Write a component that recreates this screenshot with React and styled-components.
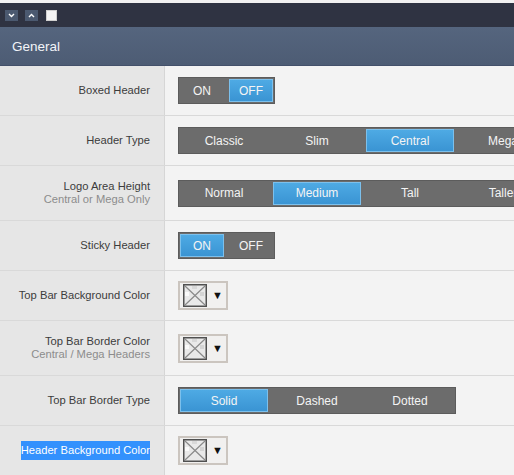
import React from 'react';
import styled, { createGlobalStyle, css } from 'styled-components';

const GlobalStyle = createGlobalStyle`
  html, body {
    margin: 0;
    padding: 0;
    background: #f1f1f1;
    overflow: hidden;
  }
  body {
    font-family: "Liberation Sans", Arial, sans-serif;
  }
`;

const Panel = styled.div`
  padding-top: 3px;
  width: 514px;
  overflow: hidden;
`;

const Toolbar = styled.div`
  display: flex;
  align-items: center;
  gap: 7px;
  height: 24px;
  padding-left: 5px;
  background: #2f3342;
`;

const ToolButton = styled.span`
  display: flex;
  align-items: center;
  justify-content: center;
  width: 13px;
  height: 11px;
  background: #4b5970;
`;

const ToolCheck = styled.span`
  width: 9px;
  height: 9px;
  margin-left: 1px;
  background: #f4f4f4;
  border: 1px solid #d0d0d0;
`;

const SectionHeader = styled.div`
  display: flex;
  align-items: center;
  height: 38px;
  padding-left: 12px;
  background: linear-gradient(#55657e, #4d5c74);
  border-bottom: 1px solid #43506a;
  color: #f2f4f8;
  font-size: 13.5px;
`;

const Row = styled.div`
  display: grid;
  grid-template-columns: 165px 1fr;
  height: ${p => (p.$tall ? 54 : 49)}px;
  border-bottom: 1px solid #d9d9d9;
`;

const LabelCell = styled.div`
  display: flex;
  flex-direction: column;
  justify-content: center;
  align-items: flex-end;
  padding-right: 14px;
  background: #e6e6e6;
  border-right: 1px solid #d6d6d6;
  text-align: right;
  font-size: 11.2px;
  line-height: 13px;
  color: #3c3c3c;
`;

const Label = styled.span`
  ${p => p.$selected && css`
    background: #3391fd;
    color: #fff;
    padding: 3px 0;
  `}
`;

const SubLabel = styled.span`
  color: #8c8c8c;
`;

const ControlCell = styled.div`
  display: flex;
  align-items: center;
  padding-left: 13px;
  background: #f3f3f3;
  overflow: hidden;
`;

const Segmented = styled.div`
  display: flex;
  flex-shrink: 0;
  gap: 5px;
  padding: 1px;
  background: #6c6c6c;
  border: 1px solid #5c5c5c;
`;

const Segment = styled.span`
  display: flex;
  align-items: center;
  justify-content: center;
  box-sizing: border-box;
  width: ${p => p.$width}px;
  height: 23px;
  color: #f4f4f4;
  font-size: 12px;
  border: 1px solid transparent;
  ${p => p.$active && css`
    background: linear-gradient(#4eaae4, #3a94d3);
    border-color: #7cc0ec;
  `}
`;

const ColorPicker = styled.div`
  display: flex;
  align-items: center;
  gap: 5px;
  box-sizing: border-box;
  width: 50px;
  height: 29px;
  padding-left: 3px;
  background: #f1f0ef;
  border: 2px solid #cbc5bf;
`;

const Swatch = styled.svg`
  display: block;
`;

const Arrow = styled.span`
  font-size: 11px;
  color: #111;
  line-height: 1;
`;

const Chevron = ({ up }) => (
  <svg width="7" height="5" viewBox="0 0 7 5">
    <path
      d={up ? 'M1 4 L3.5 1.5 L6 4' : 'M1 1 L3.5 3.5 L6 1'}
      fill="none"
      stroke="#fff"
      strokeWidth="1.4"
    />
  </svg>
);

function SegmentGroup({ options, active, width = 88 }) {
  return (
    <Segmented>
      {options.map(o => (
        <Segment key={o} $width={width} $active={o === active}>
          {o}
        </Segment>
      ))}
    </Segmented>
  );
}

function EmptyColor() {
  return (
    <ColorPicker>
      <Swatch width="24" height="23" viewBox="0 0 24 23">
        <rect x="0.75" y="0.75" width="22.5" height="21.5" fill="#e9e9e9" stroke="#505050" strokeWidth="1.5" />
        <rect x="2" y="8" width="4" height="4" fill="#fafafa" />
        <rect x="17" y="8" width="4" height="4" fill="#d4d4d4" />
        <rect x="9" y="2" width="5" height="3" fill="#d8d8d8" />
        <path d="M2 2 L22 21 M22 2 L2 21" stroke="#8a8a8a" strokeWidth="1.2" />
      </Swatch>
      <Arrow>▼</Arrow>
    </ColorPicker>
  );
}

const rows = [
  { label: 'Boxed Header', control: <SegmentGroup options={['ON', 'OFF']} active="OFF" width={44} /> },
  { label: 'Header Type', control: <SegmentGroup options={['Classic', 'Slim', 'Central', 'Mega']} active="Central" /> },
  { label: 'Logo Area Height', sub: 'Central or Mega Only', control: <SegmentGroup options={['Normal', 'Medium', 'Tall', 'Taller']} active="Medium" /> },
  { label: 'Sticky Header', control: <SegmentGroup options={['ON', 'OFF']} active="ON" width={44} /> },
  { label: 'Top Bar Background Color', control: <EmptyColor /> },
  { label: 'Top Bar Border Color', sub: 'Central / Mega Headers', control: <EmptyColor /> },
  { label: 'Top Bar Border Type', control: <SegmentGroup options={['Solid', 'Dashed', 'Dotted']} active="Solid" /> },
  { label: 'Header Background Color', selected: true, control: <EmptyColor /> },
];

export default function App() {
  return (
    <>
      <GlobalStyle />
      <Panel>
        <Toolbar>
          <ToolButton><Chevron /></ToolButton>
          <ToolButton><Chevron up /></ToolButton>
          <ToolCheck />
        </Toolbar>
        <SectionHeader>General</SectionHeader>
        {rows.map(r => (
          <Row key={r.label} $tall={!!r.sub}>
            <LabelCell>
              <Label $selected={r.selected}>{r.label}</Label>
              {r.sub && <SubLabel>{r.sub}</SubLabel>}
            </LabelCell>
            <ControlCell>{r.control}</ControlCell>
          </Row>
        ))}
      </Panel>
    </>
  );
}
